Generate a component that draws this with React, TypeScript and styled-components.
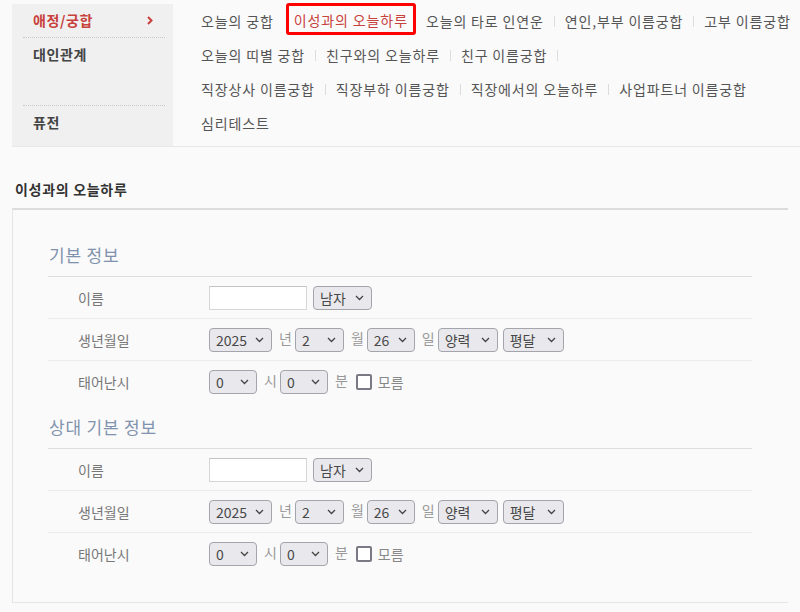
import React from 'react';
import styled, { createGlobalStyle } from 'styled-components';

const Global = createGlobalStyle`
  html, body { margin: 0; padding: 0; background: #fafafa; }
  body { font-family: "Noto Sans CJK KR", "Noto Sans", sans-serif; color: #333; }
  * { box-sizing: border-box; }
`;

type LinkItem = { t: string; active?: boolean };
type Category = { name: string; active?: boolean; height: number; lines: LinkItem[][]; trailing?: number[] };

const categories: Category[] = [
  {
    name: '애정/궁합',
    active: true,
    height: 34,
    lines: [[
      { t: '오늘의 궁합' },
      { t: '이성과의 오늘하루', active: true },
      { t: '오늘의 타로 인연운' },
      { t: '연인,부부 이름궁합' },
      { t: '고부 이름궁합' },
    ]],
  },
  {
    name: '대인관계',
    height: 68,
    trailing: [0],
    lines: [
      [{ t: '오늘의 띠별 궁합' }, { t: '친구와의 오늘하루' }, { t: '친구 이름궁합' }],
      [{ t: '직장상사 이름궁합' }, { t: '직장부하 이름궁합' }, { t: '직장에서의 오늘하루' }, { t: '사업파트너 이름궁합' }],
    ],
  },
  { name: '퓨전', height: 40, lines: [[{ t: '심리테스트' }]] },
];

const Nav = styled.nav`
  display: grid;
  grid-template-columns: 161px 1fr;
  margin: 4px 0 0 12px;
  border-bottom: 1px solid #e8e8e8;
`;

const CatCell = styled.div<{ $h: number }>`
  background: #f0f0f0;
  height: ${p => p.$h}px;
  padding: 0 8px 0 11px;
`;

const CatLabel = styled.div<{ $active?: boolean; $last?: boolean }>`
  display: flex;
  justify-content: space-between;
  align-items: flex-start;
  height: 100%;
  padding: 0 12px 0 10px;
  border-bottom: ${p => (p.$last ? 'none' : '1px dotted #c8c8c8')};
  font-size: 14px;
  font-weight: 700;
  letter-spacing: 0.6px;
  line-height: 33px;
  color: ${p => (p.$active ? '#c8413c' : '#444')};
`;

const Chevron = styled.svg`
  margin-top: 12px;
`;

const LinksCell = styled.div<{ $h: number }>`
  height: ${p => p.$h}px;
  padding-left: 28px;
`;

const LinkLine = styled.div`
  display: flex;
  align-items: center;
  height: 34px;
`;

const NavLink = styled.a`
  font-size: 14px;
  line-height: 20px;
  letter-spacing: 0.85px;
  color: #555;
  text-decoration: none;
  white-space: nowrap;
`;

const ActiveLink = styled.a`
  align-self: flex-start;
  font-size: 14px;
  line-height: 19px;
  letter-spacing: 0.9px;
  color: #c8413c;
  text-decoration: none;
  white-space: nowrap;
  border: 3px solid #ff0000;
  border-radius: 3px;
  padding: 5px 5px 2px 5px;
  margin: -1px 10px 0 12px;
`;

const Sep = styled.span`
  width: 1px;
  height: 11px;
  background: #dcdcdc;
  margin: 0 10px;
`;

const PageTitle = styled.h2`
  margin: 32px 0 9px 12px;
  padding-left: 3px;
  font-size: 14px;
  font-weight: 700;
  letter-spacing: 0.7px;
  line-height: 20px;
  color: #333;
`;

const Panel = styled.section`
  margin: 0 12px;
  border-top: 2px solid #dcdcdc;
  border-left: 1px solid #e6e6e6;
  border-bottom: 1px solid #e6e6e6;
  padding: 31px 36px 28px 35px;
`;

const SectionHead = styled.h3<{ $first?: boolean }>`
  margin: ${p => (p.$first ? 0 : 11)}px 0 0;
  padding: 0 0 7px 1px;
  font-size: 17px;
  font-weight: 400;
  letter-spacing: 0.8px;
  line-height: 28px;
  color: #8092ad;
  border-bottom: 1px solid #dedede;
`;

const Row = styled.div`
  display: flex;
  align-items: center;
  height: 42px;
  border-bottom: 1px solid #ececec;
  &:last-child { border-bottom: none; height: 41px; }
`;

const Label = styled.div`
  width: 161px;
  padding-left: 30px;
  font-size: 14px;
  color: #777;
  line-height: 20px;
`;

const Controls = styled.div`
  display: flex;
  align-items: center;
`;

const TextInput = styled.input`
  width: 98px;
  height: 24px;
  border: 1px solid #d6d6d6;
  border-top-color: #c4c4c4;
  background: #fff;
  margin: 0 6px 0 0;
  padding: 0 4px;
  font: inherit;
`;

const SelectWrap = styled.span<{ $w: number }>`
  position: relative;
  display: inline-flex;
  width: ${p => p.$w}px;
  height: 24px;
  margin-right: 5px;
`;

const Select = styled.select`
  appearance: none;
  -webkit-appearance: none;
  width: 100%;
  height: 100%;
  border: 1px solid #a4a4ac;
  border-radius: 4px;
  background: #e9e9ed;
  padding: 0 18px 0 6px;
  font-family: "Noto Sans CJK KR", sans-serif;
  font-size: 14px;
  font-weight: 400;
  line-height: 20px;
  color: #484848;
  outline: none;
`;

const Caret = styled.svg`
  position: absolute;
  right: 8px;
  top: 9px;
  pointer-events: none;
`;

const Unit = styled.span`
  font-size: 14px;
  line-height: 20px;
  color: #999;
  margin: -3px 3px 0 2px;
`;

const Check = styled.input`
  appearance: none;
  -webkit-appearance: none;
  width: 16px;
  height: 16px;
  margin: 0 6px 0 5px;
  border: 2px solid #7a7a85;
  border-radius: 2px;
  background: #fff;
`;

const CheckLabel = styled.span`
  font-size: 14px;
  color: #888;
  line-height: 20px;
`;

function Dropdown({ w, value, options }: { w: number; value: string; options?: string[] }) {
  const opts = options ?? [value];
  return (
    <SelectWrap $w={w}>
      <Select defaultValue={value}>
        {opts.map(o => (
          <option key={o} value={o}>{o}</option>
        ))}
      </Select>
      <Caret width="9" height="6" viewBox="0 0 9 6">
        <path d="M1 1l3.5 3.5L8 1" fill="none" stroke="#444" strokeWidth="1.3" />
      </Caret>
    </SelectWrap>
  );
}

function InfoSection({ title, first }: { title: string; first?: boolean }) {
  return (
    <>
      <SectionHead $first={first}>{title}</SectionHead>
      <div>
        <Row>
          <Label>이름</Label>
          <Controls>
            <TextInput type="text" />
            <Dropdown w={59} value="남자" options={['남자', '여자']} />
          </Controls>
        </Row>
        <Row>
          <Label>생년월일</Label>
          <Controls>
            <Dropdown w={63} value="2025" />
            <Unit>년</Unit>
            <Dropdown w={49} value="2" />
            <Unit>월</Unit>
            <Dropdown w={48} value="26" />
            <Unit>일</Unit>
            <Dropdown w={60} value="양력" options={['양력', '음력']} />
            <Dropdown w={61} value="평달" options={['평달', '윤달']} />
          </Controls>
        </Row>
        <Row>
          <Label>태어난시</Label>
          <Controls>
            <Dropdown w={48} value="0" />
            <Unit>시</Unit>
            <Dropdown w={48} value="0" />
            <Unit>분</Unit>
            <Check type="checkbox" />
            <CheckLabel>모름</CheckLabel>
          </Controls>
        </Row>
      </div>
    </>
  );
}

export default function App() {
  return (
    <>
      <Global />
      <Nav>
        {categories.map((c, ci) => (
          <React.Fragment key={c.name}>
            <CatCell $h={c.height}>
              <CatLabel $active={c.active} $last={ci === categories.length - 1}>
                <span>{c.name}</span>
                {c.active && (
                  <Chevron width="6" height="9" viewBox="0 0 6 9">
                    <path d="M1 1l3.5 3.5L1 8" fill="none" stroke="#c8413c" strokeWidth="2" />
                  </Chevron>
                )}
              </CatLabel>
            </CatCell>
            <LinksCell $h={c.height}>
              {c.lines.map((line, li) => (
                <LinkLine key={li}>
                  {line.map((item, i) => {
                    const prev = line[i - 1];
                    const showSep = i > 0 && !item.active && !(prev && prev.active);
                    return (
                      <React.Fragment key={item.t}>
                        {showSep && <Sep />}
                        {item.active ? (
                          <ActiveLink href="#">{item.t}</ActiveLink>
                        ) : (
                          <NavLink href="#">{item.t}</NavLink>
                        )}
                      </React.Fragment>
                    );
                  })}
                  {c.trailing?.includes(li) && <Sep />}
                </LinkLine>
              ))}
            </LinksCell>
          </React.Fragment>
        ))}
      </Nav>
      <PageTitle>이성과의 오늘하루</PageTitle>
      <Panel>
        <InfoSection title="기본 정보" first />
        <InfoSection title="상대 기본 정보" />
      </Panel>
    </>
  );
}
